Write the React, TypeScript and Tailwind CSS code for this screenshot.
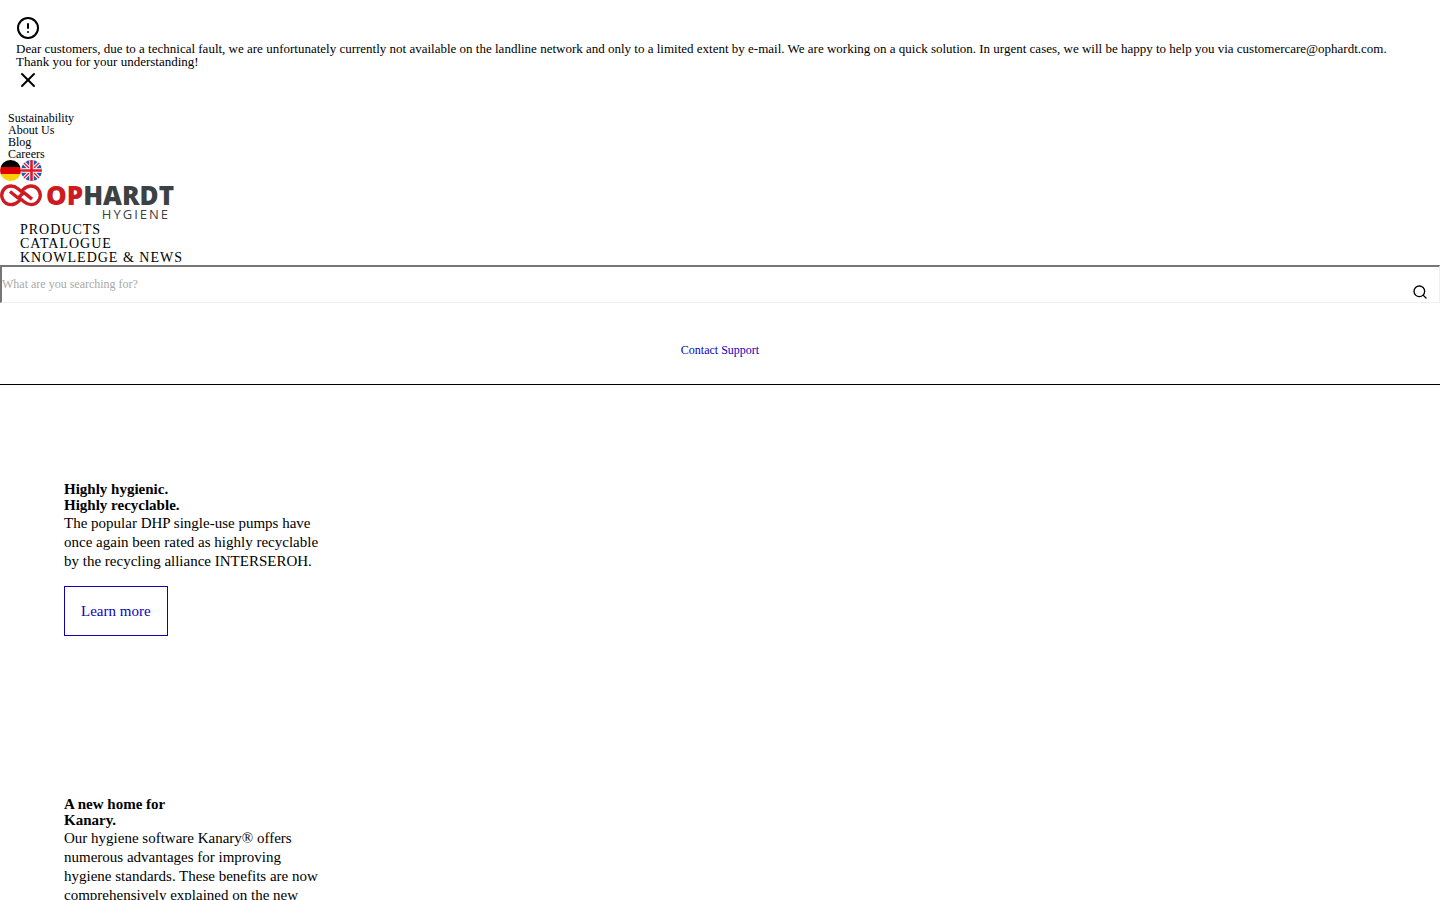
import { CircleAlert, Search, X } from "lucide-react";

const META_LINKS = ["Sustainability", "About Us", "Blog", "Careers"];
const MAIN_LINKS = ["PRODUCTS", "CATALOGUE", "KNOWLEDGE & NEWS"];

function GermanFlag() {
  return (
    <svg viewBox="0 0 21 21" className="size-[21px]" aria-hidden="true">
      <clipPath id="de-circle">
        <circle cx="10.5" cy="10.5" r="10.5" />
      </clipPath>
      <g clipPath="url(#de-circle)">
        <path d="M0 0h21v7H0z" fill="#000" />
        <path d="M0 7h21v7H0z" fill="#dd0000" />
        <path d="M0 14h21v7H0z" fill="#ffce00" />
      </g>
    </svg>
  );
}

function BritishFlag() {
  return (
    <svg viewBox="0 0 21 21" className="size-[21px]" aria-hidden="true">
      <clipPath id="gb-circle">
        <circle cx="10.5" cy="10.5" r="10.5" />
      </clipPath>
      <g clipPath="url(#gb-circle)">
        <path d="M0 0h21v21H0z" fill="#1c5aa8" />
        <path d="M0 0l21 21M21 0L0 21" stroke="#fff" strokeWidth="3.6" />
        <path d="M0 0l21 21M21 0L0 21" stroke="#e0182d" strokeWidth="1.4" />
        <path d="M10.5 0v21M0 10.5h21" stroke="#fff" strokeWidth="4.4" />
        <path d="M10.5 0v21M0 10.5h21" stroke="#e0182d" strokeWidth="2.6" />
      </g>
    </svg>
  );
}

function Logo() {
  return (
    <span className="flex gap-1 font-['Open_Sans',sans-serif] text-[#3c4242]">
      <svg viewBox="0 0 42 24" className="h-6 w-[42px]" aria-hidden="true">
        <g
          fill="none"
          stroke="#cc1b22"
          strokeWidth="3.3"
          strokeLinejoin="round"
        >
          <path d="M22.500 9.500L18 5.800C15.500 3.700 13.500 3 11 3a9.300 9.300 0 0 0 0 18.600c3 0 5-1 7.500-3.200L21 16" />
          <path d="M19.500 15.100L24 18.800c2.500 2.100 4.500 2.800 7 2.800A9.300 9.300 0 0 0 31 3c-3 0-5 1-7.500 3.200L21 8.600" />
          <path d="M10 8.500l8 6.500 6-5.400 8 6.500" />
        </g>
      </svg>
      <span className="flex flex-col items-end">
        <span className="text-[26px] leading-6 font-extrabold">
          <span className="text-[#cc1b22]">OP</span>HARDT
        </span>
        <span className="pr-1 text-[13px] leading-[14px] tracking-[2px]">
          HYGIENE
        </span>
      </span>
    </span>
  );
}

function Banner() {
  return (
    <div className="px-4 pt-4 pb-5">
      <CircleAlert size={24} />
      <p className="mt-0.5 text-[13px] leading-[13px]">
        Dear customers, due to a technical fault, we are unfortunately currently
        not available on the landline network and only to a limited extent by
        e-mail. We are working on a quick solution. In urgent cases, we will be
        happy to help you via customercare@ophardt.com.
        <br />
        Thank you for your understanding!
      </p>
      <button type="button" aria-label="Close" className="block">
        <X size={24} />
      </button>
    </div>
  );
}

function Header() {
  return (
    <header className="border-b border-black">
      <nav aria-label="Company">
        <ul className="px-2 text-xs leading-3">
          {META_LINKS.map((label) => (
            <li key={label}>
              <a href="#">{label}</a>
            </li>
          ))}
        </ul>
      </nav>
      <div className="flex">
        <a href="#" aria-label="Deutsch">
          <GermanFlag />
        </a>
        <a href="#" aria-label="English">
          <BritishFlag />
        </a>
      </div>
      <a href="#" className="mt-0.5 mb-0.5 flex">
        <Logo />
      </a>
      <nav aria-label="Main">
        <ul className="px-5 text-sm leading-[14px] tracking-[1px]">
          {MAIN_LINKS.map((label) => (
            <li key={label}>
              <a href="#">{label}</a>
            </li>
          ))}
        </ul>
      </nav>
      <form className="relative">
        <input
          type="search"
          aria-label="Search"
          placeholder="What are you searching for?"
          className="block h-[38px] w-full border-t-2 border-r border-b border-l-2 border-t-[#767676] border-r-[#efefef] border-b-[#efefef] border-l-[#767676] text-xs placeholder:text-[#a9a9a9]"
        />
        <button
          type="button"
          aria-label="Submit search"
          className="absolute right-3 bottom-[3px]"
        >
          <Search size={16} />
        </button>
      </form>
      <div className="flex justify-center pt-[41px] pb-7 text-xs leading-3">
        <a href="#" className="text-[#0f00b8]">
          Contact Support
        </a>
      </div>
    </header>
  );
}

export default function App() {
  return (
    <div className="bg-white font-['Liberation_Serif',serif] text-black">
      <Banner />
      <Header />
      <main className="px-16 pt-24">
        <section className="max-w-64 pb-40">
          <h2 className="text-[15px] leading-4 font-bold">
            Highly hygienic.
            <br />
            Highly recyclable.
          </h2>
          <p className="mt-px text-[15px] leading-[19px]">
            The popular DHP single-use pumps have once again been rated as
            highly recyclable by the recycling alliance INTERSEROH.
          </p>
          <a
            href="#"
            className="mt-[15px] inline-block border border-[#0f00b8] p-4 text-[15px] leading-4 text-[#0f00b8]"
          >
            Learn more
          </a>
        </section>
        <section className="max-w-64">
          <h2 className="text-[15px] leading-4 font-bold">
            A new home for
            <br />
            Kanary.
          </h2>
          <p className="mt-px text-[15px] leading-[19px]">
            Our hygiene software Kanary® offers numerous advantages for
            improving hygiene standards. These benefits are now comprehensively
            explained on the new
          </p>
        </section>
      </main>
    </div>
  );
}
